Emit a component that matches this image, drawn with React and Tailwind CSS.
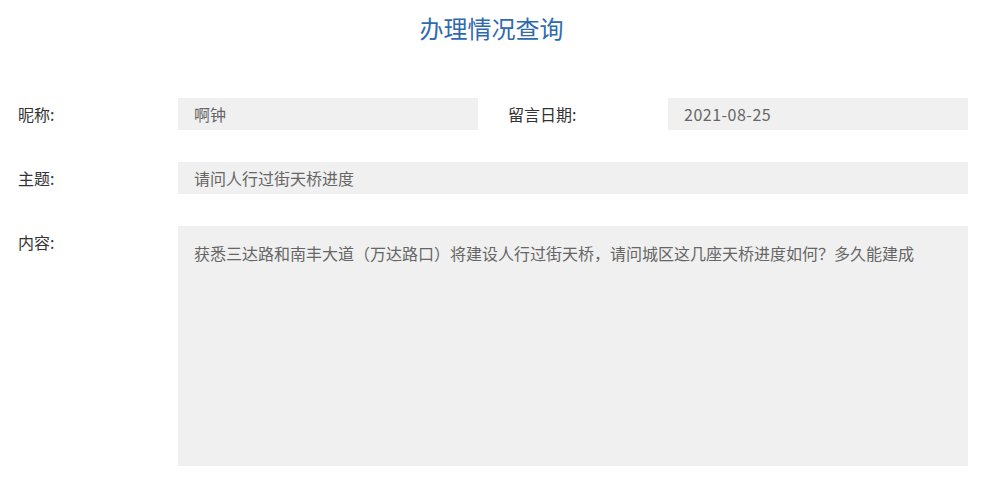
import React from 'react';

const font = { fontFamily: '"Noto Sans CJK SC", "Noto Sans", sans-serif' };

function Field({ label, children, className = '' }) {
  return (
    <div className={`flex items-start ${className}`}>
      <div className="w-[160px] shrink-0 h-8 leading-8 text-base text-[#333]">{label}</div>
      {children}
    </div>
  );
}

function Box({ children, className = '' }) {
  return (
    <div className={`bg-[#f0f0f0] px-4 text-base text-[#666] ${className}`}>{children}</div>
  );
}

export default function App() {
  const record = {
    nickname: '啊钟',
    date: '2021-08-25',
    subject: '请问人行过街天桥进度',
    content: '获悉三达路和南丰大道（万达路口）将建设人行过街天桥，请问城区这几座天桥进度如何？多久能建成',
  };

  return (
    <div className="w-[983px] h-[478px] bg-white" style={font}>
      <h1 className="pt-[12px] text-center text-2xl leading-[32px] text-[#2f6aaf]">办理情况查询</h1>

      <div className="mt-[54px] pl-[18px] w-[968px] flex flex-col gap-8">
        {/* nickname + date */}
        <div className="flex gap-[30px]">
          <Field label="昵称:">
            <Box className="w-[300px] h-8 leading-8">{record.nickname}</Box>
          </Field>
          <Field label="留言日期:">
            <Box className="w-[300px] h-8 leading-8 tracking-[0.5px]">{record.date}</Box>
          </Field>
        </div>

        {/* subject */}
        <Field label="主题:">
          <Box className="flex-1 h-8 leading-8">{record.subject}</Box>
        </Field>

        {/* content */}
        <Field label="内容:">
          <Box className="flex-1 h-[240px] pt-[15px] leading-6">{record.content}</Box>
        </Field>
      </div>
    </div>
  );
}
